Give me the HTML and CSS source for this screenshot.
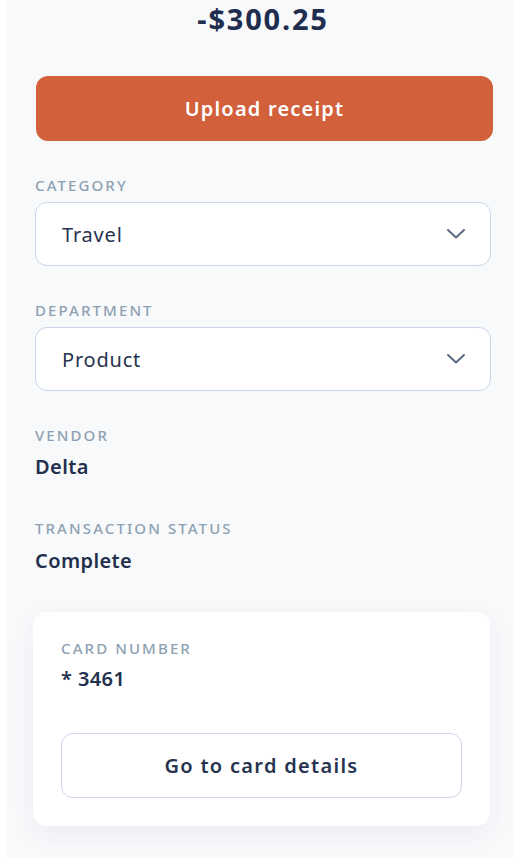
FILE: index.html
```html
<!DOCTYPE html>
<html lang="en">
<head>
    <meta charset="UTF-8">
    <meta name="viewport" content="width=device-width, initial-scale=1.0">
    <title>Transaction</title>
    <link rel="stylesheet" href="styles.css">
</head>
<body>
    <div class="panel">
        <div class="amount">-$300.25</div>
        <button class="upload">Upload receipt</button>

        <div class="field">
            <div class="label">Category</div>
            <div class="select">
                <span>Travel</span>
                <svg class="chevron" width="20" height="12" viewBox="0 0 20 12"><path d="M2 2 L10 9.5 L18 2" fill="none" stroke="#5d6b7e" stroke-width="2" stroke-linecap="round" stroke-linejoin="round"/></svg>
            </div>
        </div>

        <div class="field">
            <div class="label">Department</div>
            <div class="select">
                <span>Product</span>
                <svg class="chevron" width="20" height="12" viewBox="0 0 20 12"><path d="M2 2 L10 9.5 L18 2" fill="none" stroke="#5d6b7e" stroke-width="2" stroke-linecap="round" stroke-linejoin="round"/></svg>
            </div>
        </div>

        <div class="field">
            <div class="label">Vendor</div>
            <div class="value">Delta</div>
        </div>

        <div class="field status">
            <div class="label">Transaction status</div>
            <div class="value">Complete</div>
        </div>

        <div class="card">
            <div class="label">Card number</div>
            <div class="value">* 3461</div>
            <button class="outline">Go to card details</button>
        </div>
    </div>
</body>
</html>
```

FILE: styles.css
```css
* {
    box-sizing: border-box;
    font-family: "Noto Sans", Lato, Arial, sans-serif;
}
body {
    margin: 0;
    background: #ffffff;
}
.panel {
    margin-left: 7px;
    min-height: 858px;
    background: #f8f9fb;
    padding: 0 23px 0 28px;
    color: #23304f;
}
.amount {
    text-align: center;
    font-size: 29px;
    font-weight: 700;
    line-height: 38px;
    letter-spacing: 1.8px;
    color: #1f2d4f;
}
.upload {
    display: block;
    width: calc(100% + 1px);
    height: 65px;
    margin: 38px 0 0 1px;
    background-color: #d2603a;
    color: #ffffff;
    border: 0;
    border-radius: 12px;
    font-size: 20px;
    font-weight: 600;
    letter-spacing: 1.2px;
}
.field {
    margin-top: 35px;
}
.label {
    font-size: 15px;
    font-weight: 500;
    letter-spacing: 2.1px;
    text-transform: uppercase;
    color: #8da1b2;
    line-height: 18px;
}
.select {
    display: flex;
    align-items: center;
    justify-content: space-between;
    height: 64px;
    margin-top: 8px;
    padding: 0 24px 0 26px;
    background: #ffffff;
    border: 1px solid #c9d4ec;
    border-radius: 12px;
    font-size: 20px;
    color: #27334f;
    letter-spacing: 0.8px;
}
.value {
    margin-top: 10px;
    font-size: 20px;
    font-weight: 600;
    color: #22304e;
    line-height: 26px;
    letter-spacing: 0.4px;
}
.status {
    margin-top: 39px;
}
.status .value {
    margin-top: 11px;
}
.card {
    margin: 38px 1px 0 -2px;
    padding: 27px 28px 28px 28px;
    background: #ffffff;
    border-radius: 14px;
    box-shadow: 0 8px 24px rgba(30, 45, 80, 0.06);
}
.card .value {
    margin-top: 9px;
}
.outline {
    display: block;
    width: 100%;
    height: 65px;
    margin-top: 41px;
    background: #ffffff;
    border: 1px solid #c9d4ec;
    border-radius: 12px;
    font-size: 20px;
    font-weight: 600;
    color: #27334f;
    letter-spacing: 1.3px;
}
```
